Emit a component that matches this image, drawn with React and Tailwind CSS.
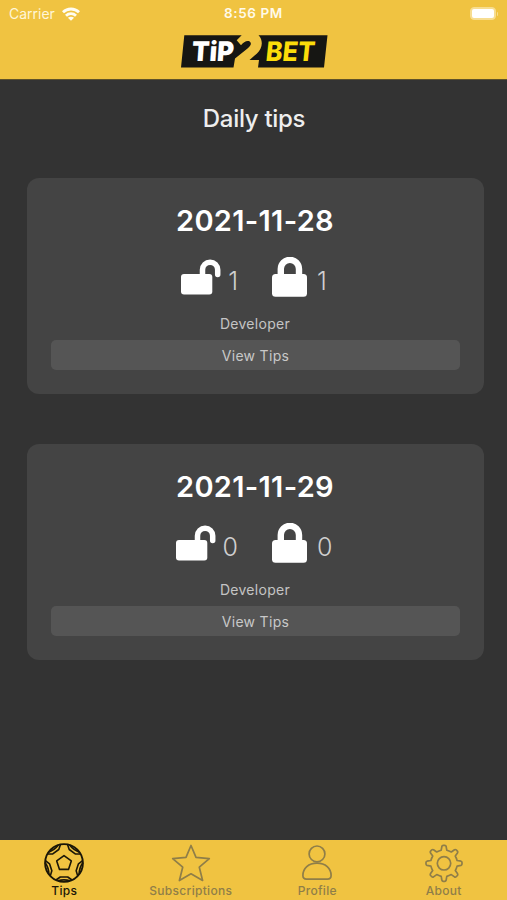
import React from "react";

const days = [
  { date: "2021-11-28", open: 1, locked: 1, author: "Developer" },
  { date: "2021-11-29", open: 0, locked: 0, author: "Developer" },
];

function Logo() {
  return (
    <svg width="147" height="33" viewBox="0 0 147 33" role="img" aria-label="Tip2Bet">
      <path
        fill="#161613"
        d="M3.3 .3H60.7L55.7 5.2L60 10.2C62.5 7 66 5.2 68.7 6.5C71 8 69.800 11 66.500 13.500L54 23.500L52.500 32.400H0Z"
      />
      <path
        fill="#161613"
        d="M77.500 .3H146.500L143 32.400H77L78 25H68.500L76 18.500C81 14 83 6 77.500 .3Z"
      />
      <g transform="translate(10.3 26) skewX(-4)">
        <text
          textLength="42"
          lengthAdjust="spacingAndGlyphs"
          fill="#fff"
          className="font-[Inter] text-[27px] font-black"
        >
          TiP
        </text>
      </g>
      <g transform="translate(84 26) skewX(-6)">
        <text
          textLength="49"
          lengthAdjust="spacingAndGlyphs"
          fill="#fbdc0a"
          className="font-[Inter] text-[27px] font-extrabold"
        >
          BET
        </text>
      </g>
    </svg>
  );
}

function WifiIcon() {
  return (
    <svg width="18" height="14" viewBox="0 0 18 14" fill="none" stroke="#fffdf2" strokeWidth="2.8">
      <path d="M1 5.2C5.5 .9 12.500 .9 17 5.200" />
      <path d="M4 8.700C6.800 6 11.200 6 14 8.700" />
      <path d="M9 13.800L5.900 10.800C7.700 9.300 10.300 9.300 12.100 10.800Z" fill="#fffdf2" stroke="none" />
    </svg>
  );
}

function UnlockIcon() {
  return (
    <svg width="40" height="40" viewBox="0 0 40 40">
      <rect x="0" y="17" width="31.300" height="20.500" rx="3" fill="#fff" />
      <path
        d="M21.500 18V12.800A7.600 7.600 0 0 1 36.700 12.800V17.500"
        fill="none"
        stroke="#fff"
        strokeWidth="5.500"
        strokeLinecap="round"
      />
    </svg>
  );
}

function LockIcon() {
  return (
    <svg width="35" height="40" viewBox="0 0 35 40">
      <rect x="0" y="17" width="35" height="22.700" rx="3.500" fill="#fff" />
      <path
        d="M8.800 19V12A9.100 9.100 0 0 1 27 12V19"
        fill="none"
        stroke="#fff"
        strokeWidth="6.400"
      />
    </svg>
  );
}

const patchAngles = [0, 72, 144, 216, 288];

function BallIcon() {
  return (
    <svg width="42" height="42" viewBox="0 0 42 42" fill="none" stroke="currentColor" strokeWidth="1.600" strokeLinejoin="round">
      <circle cx="21" cy="21" r="18.900" strokeWidth="1.900" />
      <path d="M21 13.600L28.300 18.900L25.500 27.400H16.500L13.700 18.900Z" />
      {patchAngles.map((angle) => (
        <path
          key={angle}
          transform={`translate(21 21) rotate(${angle})`}
          d="M-8 17L-3.700 14H3.700L8 17M-6 17.800Q0 16 6 17.800"
        />
      ))}
    </svg>
  );
}

function StarIcon() {
  return (
    <svg width="42" height="42" viewBox="0 0 42 42" fill="none" stroke="currentColor" strokeWidth="1.700" strokeLinejoin="round">
      <path d="M21 3.500L26 15.400L39.300 16.600L29.300 25.200L32.600 38.500L21 31.800L9.400 38.500L12.700 25.200L2.700 16.600L16 15.400Z" />
    </svg>
  );
}

function ProfileIcon() {
  return (
    <svg width="42" height="42" viewBox="0 0 42 42" fill="none" stroke="currentColor" strokeWidth="1.700">
      <circle cx="21" cy="11.900" r="7.900" />
      <path d="M21 21.200C12.500 21.200 6.900 26.500 6.900 33.500C6.900 36 8.200 37.100 10.500 37.100H31.500C33.800 37.100 35.100 36 35.100 33.500C35.100 26.500 29.500 21.200 21 21.200Z" />
    </svg>
  );
}

function GearIcon() {
  return (
    <svg width="42" height="42" viewBox="0 0 42 42" fill="none" stroke="currentColor" strokeWidth="1.700" strokeLinejoin="round">
      <circle cx="21" cy="21.300" r="6.700" />
      <path d="M18.200 8.200L18.900 4.300Q19.200 3.300 20.200 3.300H21.800Q22.800 3.300 23.100 4.300L23.800 8.200Q26 8.800 28.300 10L31.500 7.700Q32.400 7.200 33.200 7.900L34.400 9.100Q35.100 9.900 34.600 10.800L32.300 14Q33.500 16.300 34.100 18.500L38 19.200Q39 19.500 39 20.500V22.100Q39 23.100 38 23.400L34.100 24.100Q33.500 26.300 32.300 28.600L34.600 31.800Q35.100 32.700 34.400 33.500L33.200 34.700Q32.400 35.400 31.500 34.900L28.300 32.600Q26 33.800 23.800 34.400L23.100 38.300Q22.800 39.300 21.800 39.300H20.200Q19.200 39.300 18.900 38.300L18.200 34.400Q16 33.800 13.700 32.600L10.500 34.900Q9.600 35.400 8.800 34.700L7.600 33.500Q6.900 32.700 7.400 31.800L9.700 28.600Q8.500 26.300 7.900 24.100L4 23.400Q3 23.100 3 22.100V20.500Q3 19.500 4 19.200L7.900 18.500Q8.500 16.300 9.700 14L7.400 10.800Q6.900 9.900 7.600 9.100L8.800 7.900Q9.600 7.200 10.500 7.700L13.700 10Q16 8.800 18.200 8.200Z" />
    </svg>
  );
}

const tabs = [
  { label: "Tips", Icon: BallIcon, active: true },
  { label: "Subscriptions", Icon: StarIcon },
  { label: "Profile", Icon: ProfileIcon },
  { label: "About", Icon: GearIcon },
];

function TipCard({ day }) {
  return (
    <div className="h-[216px] rounded-xl bg-[#444444] px-6 pt-[25px]">
      <h2 className="pr-px text-center text-[29px] leading-9 font-semibold tracking-[0.3px] text-white">
        {day.date}
      </h2>
      <div className="mt-[18px] flex h-10 justify-center gap-[34px] pr-[3px] text-[25px] font-light text-[#cfcfcf]">
        <div className="flex gap-[7px]">
          <UnlockIcon />
          <span className="pt-[6px] leading-9">{day.open}</span>
        </div>
        <div className="flex gap-[10px]">
          <LockIcon />
          <span className="pt-[6px] leading-9">{day.locked}</span>
        </div>
      </div>
      <p className="mt-[17px] pr-px text-center text-[14px] leading-5 tracking-[0.3px] text-[#c4c4c4]">
        {day.author}
      </p>
      <button className="mt-[6px] block h-[30px] w-full rounded-[5px] bg-[#555555] text-[14px] tracking-[0.3px] text-[#c8c8c8]">
        View Tips
      </button>
    </div>
  );
}

export default function App() {
  return (
    <div className="flex h-[900px] w-[507px] flex-col overflow-hidden bg-[#333333] font-[Inter,sans-serif]">
      <header className="h-[80px] border-b border-[#5f5229] bg-[#f0c341]">
        <div className="grid h-[27px] grid-cols-3 items-center px-[9px] text-[#fff6d8]">
          <div className="flex items-center gap-[7px]">
            <span className="text-[14px]">Carrier</span>
            <WifiIcon />
          </div>
          <span className="text-center text-[13.5px] font-semibold tracking-[0.6px] text-[#fffaea]">
            8:56 PM
          </span>
          <div className="flex items-center justify-end gap-px">
            <div className="h-[13px] w-[26px] rounded-[4px] border border-[#f7dd90] bg-[#f7dd90] p-px">
              <div className="h-full rounded-[2px] bg-white" />
            </div>
            <div className="h-1 w-px rounded-r bg-[#f7dd90]" />
          </div>
        </div>
        <div className="flex justify-center pt-[8px] pl-px">
          <Logo />
        </div>
      </header>

      <main className="flex-1 pr-[23px] pl-[27px]">
        <h1 className="pt-[23px] pr-[3px] text-center text-[24px] leading-8 font-medium tracking-[-0.3px] text-[#eeeeee]">
          Daily tips
        </h1>
        <div className="mt-[43px] flex flex-col gap-[50px]">
          {days.map((day) => (
            <TipCard key={day.date} day={day} />
          ))}
        </div>
      </main>

      <nav className="grid h-[60px] grid-cols-4 bg-[#f0c341] pt-[2px] pl-px">
        {tabs.map(({ label, Icon, active }) => (
          <div
            key={label}
            className={
              active
                ? "flex flex-col items-center text-[#1a1608]"
                : "flex flex-col items-center text-[#8f7e48]"
            }
          >
            <Icon />
            <span className="text-[12px] leading-[14px] font-medium tracking-[0.3px]">
              {label}
            </span>
          </div>
        ))}
      </nav>
    </div>
  );
}
